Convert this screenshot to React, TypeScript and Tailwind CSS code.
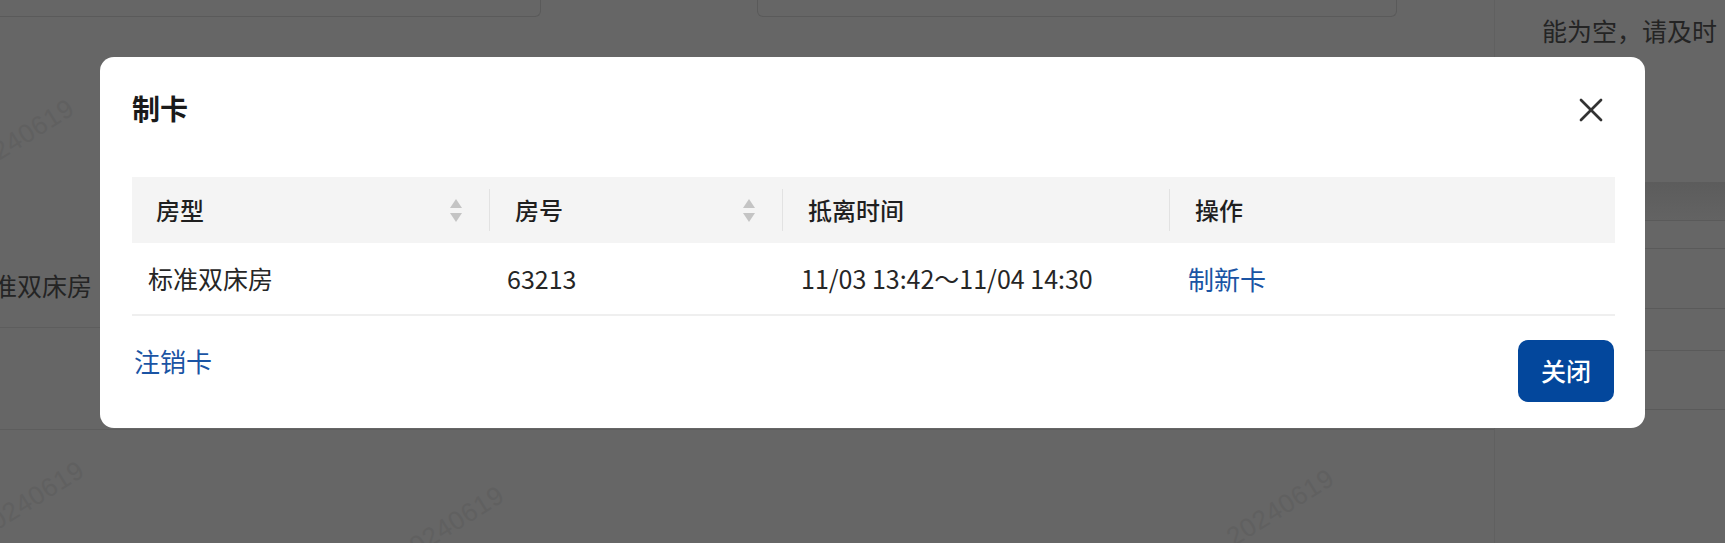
import { X } from "lucide-react"

const cjk = "font-['Noto_Sans_CJK_SC',sans-serif]"

function SortIcon() {
  return (
    <svg width="14" height="25" viewBox="0 0 14 25" className="shrink-0">
      <path d="M7 1 L13 10 L1 10 Z" fill="#c4c4c4" />
      <path d="M7 24 L13 15 L1 15 Z" fill="#c4c4c4" />
    </svg>
  )
}

function HeadCell({ label, sort, divider }: { label: string; sort?: boolean; divider?: boolean }) {
  return (
    <th className="h-[66px] bg-[#f4f4f4] p-0 text-left font-medium">
      <div className="flex h-full items-center pl-[24px]">
        <span className="flex-1 text-[24px] leading-[32px] text-[#1f1f1f]">{label}</span>
        {sort && <SortIcon />}
        {divider && <span className={`${sort ? "ml-[26px]" : ""} mr-px h-[42px] w-px bg-[#e2e2e2]`} />}
      </div>
    </th>
  )
}

function Watermark({ className }: { className: string }) {
  return (
    <span className={`absolute -rotate-[32deg] text-[26px] tracking-wide text-[#606060] font-['Liberation_Sans',sans-serif] ${className}`}>
      20240619
    </span>
  )
}

function App() {
  return (
    <div className={`relative h-[543px] w-[1725px] overflow-hidden bg-[#666666] ${cjk}`}>
      {/* page behind the dialog */}
      <div className="flex h-full">
        <div className="flex w-[1495px] flex-col border-r border-[#606060]">
          <div className="flex h-[17px] gap-[216px]">
            <div className="-ml-[10px] h-[17px] w-[551px] rounded-b-[6px] border border-t-0 border-[#5a5a5a]" />
            <div className="h-[17px] w-[640px] rounded-b-[6px] border border-t-0 border-[#5a5a5a]" />
          </div>
          <div className="h-[227px]" />
          <div className="flex h-[84px] items-center border-b border-[#5d5d5d]">
            <span className="-ml-[8px] text-[25px] text-[#242424]">准双床房</span>
          </div>
          <div className="h-[102px] border-b border-[#5d5d5d]" />
        </div>
        <div className="flex flex-1 flex-col">
          <div className="h-[182px] pl-[47px] pt-[12px]">
            <span className="whitespace-nowrap text-[25px] leading-[36px] text-[#242424]">能为空，请及时</span>
          </div>
          <div className="h-[38px] bg-gradient-to-b from-[#5c5c5c] to-[#636363]" />
          <div className="h-[28px] border-t border-[#5a5a5a]" />
          <div className="h-[60px] border-t border-[#5a5a5a]" />
          <div className="h-[42px] border-t border-[#5a5a5a]" />
          <div className="h-[60px] border-t border-b border-[#5a5a5a]" />
        </div>
      </div>

      <Watermark className="-left-[40px] top-[118px]" />
      <Watermark className="-left-[30px] top-[480px]" />
      <Watermark className="left-[390px] top-[505px]" />
      <Watermark className="left-[1220px] top-[488px]" />

      {/* dialog */}
      <div className="absolute inset-0 pl-[100px] pt-[57px]">
        <div className="flex h-[371px] w-[1545px] flex-col rounded-[14px] bg-white pl-[32px] pr-[30px] pb-[26px]">
          <div className="flex h-[121px] items-start justify-between pt-[35px]">
            <h2 className="text-[28px] font-semibold leading-[32px] text-[#1a1a1a]">制卡</h2>
            <button className="mr-[4px] mt-[-2px] text-[#333]">
              <X size={40} strokeWidth={1.6} />
            </button>
          </div>

          <table className="w-[1483px] table-fixed border-collapse">
            <colgroup>
              <col className="w-[359px]" />
              <col className="w-[293px]" />
              <col className="w-[387px]" />
              <col className="w-[444px]" />
            </colgroup>
            <thead>
              <tr>
                <HeadCell label="房型" sort divider />
                <HeadCell label="房号" sort divider />
                <HeadCell label="抵离时间" divider />
                <HeadCell label="操作" />
              </tr>
            </thead>
            <tbody>
              <tr className="h-[72px] border-b-2 border-[#efefef] text-[25px] text-[#262626]">
                <td className="pl-[16px]">标准双床房</td>
                <td className="pl-[16px]">63213</td>
                <td className="pl-[17px] whitespace-nowrap">11/03 13:42～11/04 14:30</td>
                <td className="pl-[17px] text-[26px] text-[#1a54a4]">制新卡</td>
              </tr>
            </tbody>
          </table>

          <div className="mt-[24px] flex items-start justify-between">
            <button className="ml-[2px] mt-[4px] text-[26px] leading-[34px] text-[#1a54a4]">注销卡</button>
            <button className="mr-[1px] h-[62px] w-[96px] rounded-[10px] bg-[#03479c] text-[25px] font-medium text-white">
              关闭
            </button>
          </div>
        </div>
      </div>
    </div>
  )
}

export default App
